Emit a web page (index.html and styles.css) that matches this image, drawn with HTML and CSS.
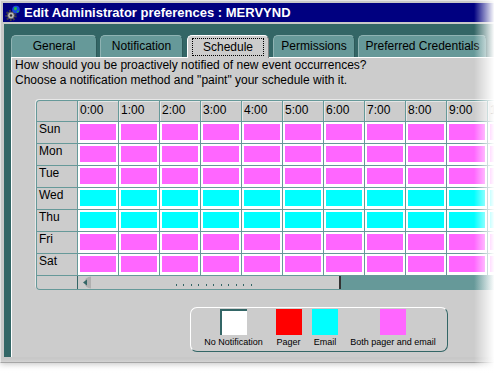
FILE: index.html
```html
<!DOCTYPE html>
<html lang="en">
<head>
    <meta charset="UTF-8">
    <title>Edit Administrator preferences : MERVYND</title>
    <link rel="stylesheet" href="styles.css">
</head>
<body>
    <div class="window">
        <div class="frame">
            <div class="titlebar">
                <svg class="app-icon" width="16" height="16" viewBox="0 0 16 16">
                    <circle cx="6" cy="10.5" r="4.6" fill="none" stroke="#404040" stroke-width="2.2" stroke-dasharray="1.8 1.4"/>
                    <circle cx="6" cy="10.5" r="3.4" fill="#b8b8b8" stroke="#505050" stroke-width="0.8"/>
                    <circle cx="6" cy="10.5" r="1.2" fill="#303030"/>
                    <circle cx="11" cy="4.5" r="3.8" fill="#1848e0"/>
                    <path d="M9 2.5 L11.5 2 L12 4 L10.5 5.5 L9.2 4.8 Z M12 6 L13.8 5.5 L13.5 7.2 L12.2 7.6 Z" fill="#20c040"/>
                </svg>
                <span>Edit Administrator preferences : MERVYND</span>
            </div>
            <div class="client">
                <div class="tabs">
                    <div class="tab tab-general">General</div>
                    <div class="tab tab-notification">Notification</div>
                    <div class="tab tab-schedule active"><span class="focus">Schedule</span></div>
                    <div class="tab tab-permissions">Permissions</div>
                    <div class="tab tab-credentials">Preferred Credentials</div>
                </div>
                <div class="panel">
                    <p class="intro">How should you be proactively notified of new event occurrences?<br>Choose a notification method and "paint" your schedule with it.</p>

                    <div class="schedule">
                        <div class="grid">
                            <div class="corner"></div>
                            <div class="hd">0:00</div><div class="hd">1:00</div><div class="hd">2:00</div><div class="hd">3:00</div><div class="hd">4:00</div><div class="hd">5:00</div><div class="hd">6:00</div><div class="hd">7:00</div><div class="hd">8:00</div><div class="hd">9:00</div><div class="hd">10:00</div>

                            <div class="day">Sun</div>
                            <div class="c"><i></i></div><div class="c"><i></i></div><div class="c"><i></i></div><div class="c"><i></i></div><div class="c"><i></i></div><div class="c"><i></i></div><div class="c"><i></i></div><div class="c"><i></i></div><div class="c"><i></i></div><div class="c"><i></i></div><div class="c"><i></i></div>

                            <div class="day">Mon</div>
                            <div class="c"><i></i></div><div class="c"><i></i></div><div class="c"><i></i></div><div class="c"><i></i></div><div class="c"><i></i></div><div class="c"><i></i></div><div class="c"><i></i></div><div class="c"><i></i></div><div class="c"><i></i></div><div class="c"><i></i></div><div class="c"><i></i></div>

                            <div class="day">Tue</div>
                            <div class="c"><i></i></div><div class="c"><i></i></div><div class="c"><i></i></div><div class="c"><i></i></div><div class="c"><i></i></div><div class="c"><i></i></div><div class="c"><i></i></div><div class="c"><i></i></div><div class="c"><i></i></div><div class="c"><i></i></div><div class="c"><i></i></div>

                            <div class="day">Wed</div>
                            <div class="c e"><i></i></div><div class="c e"><i></i></div><div class="c e"><i></i></div><div class="c e"><i></i></div><div class="c e"><i></i></div><div class="c e"><i></i></div><div class="c e"><i></i></div><div class="c e"><i></i></div><div class="c e"><i></i></div><div class="c e"><i></i></div><div class="c e"><i></i></div>

                            <div class="day">Thu</div>
                            <div class="c e"><i></i></div><div class="c e"><i></i></div><div class="c e"><i></i></div><div class="c e"><i></i></div><div class="c e"><i></i></div><div class="c e"><i></i></div><div class="c e"><i></i></div><div class="c e"><i></i></div><div class="c e"><i></i></div><div class="c e"><i></i></div><div class="c e"><i></i></div>

                            <div class="day">Fri</div>
                            <div class="c"><i></i></div><div class="c"><i></i></div><div class="c"><i></i></div><div class="c"><i></i></div><div class="c"><i></i></div><div class="c"><i></i></div><div class="c"><i></i></div><div class="c"><i></i></div><div class="c"><i></i></div><div class="c"><i></i></div><div class="c"><i></i></div>

                            <div class="day">Sat</div>
                            <div class="c"><i></i></div><div class="c"><i></i></div><div class="c"><i></i></div><div class="c"><i></i></div><div class="c"><i></i></div><div class="c"><i></i></div><div class="c"><i></i></div><div class="c"><i></i></div><div class="c"><i></i></div><div class="c"><i></i></div><div class="c"><i></i></div>

                            <div class="hscroll">
                                <div class="sb-corner"></div>
                                <div class="sb-btn">
                                    <svg width="14" height="13" viewBox="0 0 14 13">
                                        <path d="M13 0.5 A6.5 6 0 0 0 13 12.5 Z" fill="#b0b0b0"/>
                                        <path d="M9 3.5 L5 6.5 L9 9.5 Z" fill="#336666"/>
                                    </svg>
                                </div>
                                <div class="sb-thumb"><span class="grip"></span></div>
                                <div class="sb-track"></div>
                            </div>
                        </div>
                    </div>

                    <div class="legend">
                        <div class="li"><span class="sw sw-none"></span><span class="lbl">No Notification</span></div>
                        <div class="li li-pager"><span class="sw sw-pager"></span><span class="lbl">Pager</span></div>
                        <div class="li li-email"><span class="sw sw-email"></span><span class="lbl">Email</span></div>
                        <div class="li li-both"><span class="sw sw-both"></span><span class="lbl">Both pager and email</span></div>
                    </div>
                </div>
            </div>
        </div>
        <div class="fade-right"></div>
        <div class="fade-bottom"></div>
    </div>
</body>
</html>
```

FILE: styles.css
```css
body {
    margin: 0;
    background: #fff;
    font-family: "Liberation Sans", Arial, sans-serif;
}
.window {
    position: relative;
    width: 498px;
    height: 375px;
    overflow: hidden;
    background: #fff;
}
.frame {
    height: 363px;
    box-sizing: border-box;
    background: #c8c8c8;
    border-top: 1px solid #e4e4e4;
    border-left: 1px solid #e4e4e4;
    border-bottom: 1px solid #8a8a8a;
    padding: 2px 0 5px 2px;
    display: flex;
    flex-direction: column;
    box-shadow: 0 3px 6px rgba(0, 0, 0, 0.25);
}
.titlebar {
    height: 19px;
    flex: none;
    background: #000080;
    display: flex;
    align-items: center;
    gap: 3px;
    padding-left: 2px;
    color: #fff;
    font-weight: bold;
    font-size: 13px;
}
.client {
    flex: 1;
    margin: 2px 0 0 1px;
    background: #336666;
    padding: 11px 0 0 7px;
    display: flex;
    flex-direction: column;
    min-height: 0;
}

/* tabs */
.tabs {
    display: flex;
    height: 22px;
    flex: none;
}
.tab {
    box-sizing: border-box;
    height: 22px;
    background: #669999;
    border-top: 1px solid #8fb3b3;
    border-left: 1px solid #8fb3b3;
    border-right: 1px solid #2d5a5a;
    border-radius: 5px 5px 0 0;
    font-size: 12px;
    line-height: 20px;
    text-align: center;
    color: #000;
}
.tab-general { width: 86px; }
.tab-notification { width: 83px; margin-left: 3px; }
.tab-schedule { width: 82px; margin-left: 4px; }
.tab-permissions { width: 82px; margin-left: 4px; }
.tab-credentials { width: 129px; margin-left: 3px; }
.tab.active {
    background: #cccccc;
    border-top-color: #fff;
    border-left-color: #fff;
    border-right-color: #808080;
    height: 23px;
    margin-bottom: -1px;
    position: relative;
    padding-top: 1px;
}
.focus {
    display: inline-block;
    width: 70px;
    height: 16px;
    line-height: 16px;
    border: 1px dotted #000;
}

/* panel */
.panel {
    flex: 1;
    background: #cccccc;
    border-top: 1px solid #fff;
    border-left: 1px solid #fff;
    min-height: 0;
}
.intro {
    margin: 0;
    padding-left: 3px;
    font-size: 12px;
    line-height: 15px;
    color: #000;
    white-space: nowrap;
}

/* schedule grid */
.schedule {
    margin: 12px 0 0 24px;
    width: max-content;
    border: 1px solid #669999;
    border-right: none;
    border-radius: 4px 0 0 4px;
    box-shadow: -1px -1px 0 #e8e8e8;
    overflow: hidden;
}
.grid {
    display: grid;
    grid-template-columns: 40px repeat(11, 40px);
    grid-template-rows: 20px repeat(7, 21px) 13px;
    gap: 1px;
    background: #669999;
}
.corner,
.hd,
.day {
    background: #cccccc;
    font-size: 12px;
    color: #000;
}
.hd {
    padding: 2px 0 0 2px;
    line-height: 14px;
    box-shadow: inset 1px 1px 0 #e6e6e6;
}
.day {
    padding-left: 2px;
    line-height: 15px;
}
.c {
    background: #fff;
    padding: 2px 2px 3px;
}
.c i {
    display: block;
    height: 16px;
    background: #ff66ff;
}
.c.e i {
    background: #00ffff;
}
.hscroll {
    grid-column: 1 / -1;
    display: flex;
    background: #cccccc;
}
.sb-corner {
    width: 40px;
    border-right: 1px solid #336666;
    flex: none;
}
.sb-btn {
    width: 14px;
    flex: none;
    display: flex;
}
.sb-thumb {
    width: 247px;
    flex: none;
    border-right: 2px solid #333;
    position: relative;
}
.grip {
    position: absolute;
    left: 84px;
    bottom: 3px;
    width: 82px;
    height: 2px;
    background: repeating-linear-gradient(90deg, #336666 0 1px, transparent 1px 7.5px);
}
.sb-track {
    flex: 1;
    background: #669999;
}

/* legend */
.legend {
    margin: 17px 0 0 178px;
    width: 258px;
    height: 45px;
    box-sizing: border-box;
    border: 1px solid #336666;
    border-top-color: #fff;
    border-left-color: #fff;
    border-radius: 7px;
    display: flex;
    gap: 13px;
    padding: 1px 0 0 12px;
}
.li {
    width: 61px;
    display: flex;
    flex-direction: column;
    align-items: center;
}
.li-pager { width: 23px; }
.li-email { width: 24px; }
.li-both { width: 86px; }
.sw {
    display: block;
    width: 26px;
    height: 26px;
    box-sizing: border-box;
    flex: none;
}
.sw-none {
    width: 27px;
    background: #fff;
    border-top: 2px solid #336666;
    border-left: 2px solid #336666;
}
.sw-pager { background: #ff0000; }
.sw-email { background: #00ffff; }
.sw-both { background: #ff66ff; }
.lbl {
    margin-top: 2px;
    font-size: 9px;
    line-height: 11px;
    color: #000;
    white-space: nowrap;
}

/* soft edges of the capture */
.fade-right {
    position: absolute;
    top: 0;
    right: 0;
    width: 24px;
    height: 100%;
    background: linear-gradient(to right, rgba(255, 255, 255, 0), #fff 85%);
}
.fade-bottom {
    position: absolute;
    left: 0;
    bottom: 0;
    width: 100%;
    height: 16px;
    background: linear-gradient(to bottom, rgba(255, 255, 255, 0), #fff 90%);
}
```
